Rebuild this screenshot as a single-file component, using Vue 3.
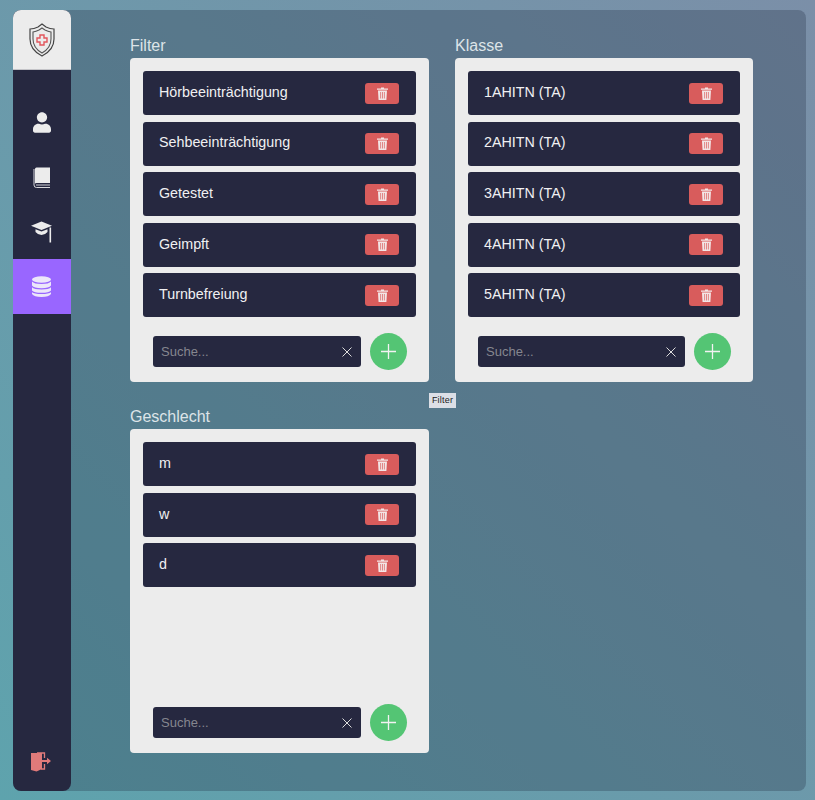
<template>
  <div class="page">
    <div class="panel">
      <aside class="sidebar">
        <div class="logo">
          <svg width="26" height="34" viewBox="0 0 26 34" fill="none">
            <path d="M13 1 L17 4 Q21 6 25 6 V16 Q25 27 13 33 Q1 27 1 16 V6 Q5 6 9 4 Z" stroke="#444" stroke-width="1.2" />
            <path d="M13 5 L16 7 Q19 8.500 22 9 V16 Q22 25 13 30 Q4 25 4 16 V9 Q7 8.500 10 7 Z" stroke="#555" stroke-width="1.1" />
            <path d="M11 12 H15 V15 H18 V19 H15 V22 H11 V19 H8 V15 H11 Z" stroke="#e2555c" stroke-width="1.4" />
          </svg>
        </div>
        <nav class="nav">
          <a class="nav-item">
            <svg width="18" height="21" viewBox="0 0 448 512" fill="#ececec">
              <path d="M224 256c70.700 0 128-57.300 128-128S294.700 0 224 0 96 57.300 96 128s57.300 128 128 128zm89.600 32h-16.700c-22.200 10.200-46.900 16-72.900 16s-50.600-5.800-72.900-16h-16.700C60.200 288 0 348.200 0 422.400V464c0 26.500 21.500 48 48 48h352c26.500 0 48-21.500 48-48v-41.600c0-74.200-60.200-134.400-134.400-134.400z" />
            </svg>
          </a>
          <a class="nav-item">
            <svg width="18" height="21" viewBox="0 0 18 21" fill="none">
              <path d="M3.500 0.500 H17 V16 H3.500 Q2.500 16 2 16.500 V2 Q2 0.500 3.500 0.500 Z" fill="#ececec" />
              <path d="M1 2 V18 Q1 20.500 3.500 20.500 H17" stroke="#d8d8dc" stroke-width="1" />
              <path d="M3 18 H17" stroke="#9a9aa6" stroke-width="1.500" />
            </svg>
          </a>
          <a class="nav-item">
            <svg width="22" height="22" viewBox="0 0 22 22" fill="#ececec">
              <path d="M10.500 0.500 L21 4.700 L10.500 9 L0 4.700 Z" />
              <path d="M4.500 8.200 L10.500 10.600 L16.500 8.200 V11 Q14 14 10.500 14 Q7 14 4.500 11 Z" />
              <rect x="18.500" y="6.500" width="1.600" height="15" />
            </svg>
          </a>
          <a class="nav-item active">
            <svg width="19" height="21" viewBox="0 0 19 21" fill="#ece6fa">
              <ellipse cx="9.500" cy="3.500" rx="9.500" ry="3.200" />
              <path d="M0 5.500 Q2 8 9.500 8 Q17 8 19 5.500 V9.500 Q17 12.300 9.500 12.300 Q2 12.300 0 9.500 Z" />
              <path d="M0 11.300 Q2 13.500 9.500 13.500 Q17 13.500 19 11.300 V14.500 Q17 16.800 9.500 16.800 Q2 16.800 0 14.500 Z" />
              <path d="M0 16.200 Q2 18 9.500 18 Q17 18 19 16.200 V18 Q17 21 9.500 21 Q2 21 0 18 Z" />
            </svg>
          </a>
        </nav>
        <a class="logout">
          <svg width="21" height="20" viewBox="0 0 21 20" fill="none">
            <path d="M0 1 H11 V17 L5.500 19.500 L0 18 Z" fill="#e07a7a" />
            <path d="M6 1 H13.500 V6 M13.500 12 V17 H10" stroke="#e07a7a" stroke-width="1.300" />
            <path d="M9.500 8 H16 V5.800 L20 9 L16 12.200 V10 H9.500 Z" fill="#e07a7a" />
          </svg>
        </a>
      </aside>

      <main class="content">
        <section v-for="group in groups" :key="group.title" class="group">
          <h2 class="group-title">{{ group.title }}</h2>
          <div class="card">
            <ul class="rows">
              <li v-for="item in group.items" :key="item" class="row">
                <span class="row-label">{{ item }}</span>
                <button class="trash-btn" type="button">
                  <svg width="11" height="13" viewBox="0 0 11 13" fill="none">
                    <path d="M4 0.500 H7 V1.500 H11 V2.800 H0 V1.500 H4 Z" fill="#f3e6e6" />
                    <path d="M1 3.600 H10 L9.400 13 H1.600 Z" fill="#f3e6e6" />
                    <path d="M3.600 5 V11.500 M5.500 5 V11.500 M7.400 5 V11.500" stroke="#d85c5c" stroke-width="0.700" />
                  </svg>
                </button>
              </li>
            </ul>
            <div class="search-row">
              <div class="search">
                <span class="search-text">Suche...</span>
                <svg width="10" height="10" viewBox="0 0 10 10" fill="none">
                  <path d="M0.500 0.500 L9.500 9.500 M9.500 0.500 L0.500 9.500" stroke="#dcdcdc" stroke-width="1" />
                </svg>
              </div>
              <button class="add-btn" type="button">
                <svg width="15" height="15" viewBox="0 0 15 15" fill="none">
                  <path d="M7.500 0 V15 M0 7.500 H15" stroke="#f2f2f2" stroke-width="1.300" />
                </svg>
              </button>
            </div>
          </div>
        </section>
        <div class="tooltip">Filter</div>
      </main>
    </div>
  </div>
</template>

<script setup>
const groups = [
  {
    title: 'Filter',
    items: ['Hörbeeinträchtigung', 'Sehbeeinträchtigung', 'Getestet', 'Geimpft', 'Turnbefreiung'],
  },
  {
    title: 'Klasse',
    items: ['1AHITN (TA)', '2AHITN (TA)', '3AHITN (TA)', '4AHITN (TA)', '5AHITN (TA)'],
  },
  {
    title: 'Geschlecht',
    items: ['m', 'w', 'd'],
  },
]
</script>

<style>
html, body { margin: 0; padding: 0; }
</style>

<style scoped>
.page {
  box-sizing: border-box;
  width: 815px;
  height: 800px;
  padding: 10px 9px 9px 12.500px;
  background: linear-gradient(to top right, #5ea3ad, #7b8fa8);
  font-family: "Liberation Sans", Arial, sans-serif;
  overflow: hidden;
}
.panel {
  display: flex;
  height: 781px;
  border-radius: 8px;
  background: rgba(30, 40, 60, 0.28);
}
.sidebar {
  display: flex;
  flex-direction: column;
  flex: 0 0 58.500px;
  background: #262840;
  border-radius: 8px;
  overflow: hidden;
}
.logo {
  display: flex;
  align-items: center;
  justify-content: center;
  height: 59px;
  background: #ececec;
  border-bottom: 1px solid #c4c4c8;
}
.nav {
  display: flex;
  flex-direction: column;
  padding-top: 25.500px;
}
.nav-item {
  display: flex;
  align-items: center;
  justify-content: center;
  height: 54.500px;
}
.nav-item.active {
  background: #9966ff;
}
.logout {
  display: flex;
  justify-content: center;
  margin-top: auto;
  padding: 0 0 19px 0;
}
.content {
  position: relative;
  display: grid;
  grid-template-columns: 299px 298px;
  grid-auto-rows: 371.200px;
  column-gap: 26px;
  padding: 26px 0 0 59px;
}
.group {
  display: flex;
  flex-direction: column;
}
.group-title {
  margin: 0;
  height: 22px;
  font-size: 16px;
  line-height: 20px;
  font-weight: 400;
  color: #dde4e8;
}
.card {
  box-sizing: border-box;
  display: flex;
  flex-direction: column;
  height: 324px;
  padding: 13px 13px 12px;
  background: #ececec;
  border-radius: 4px;
}
.rows {
  display: flex;
  flex-direction: column;
  gap: 6.600px;
  margin: 0;
  padding: 0;
  list-style: none;
}
.row {
  display: flex;
  align-items: center;
  justify-content: space-between;
  height: 44px;
  padding: 0 17px 0 16px;
  background: #262840;
  border-radius: 3px;
}
.row-label {
  font-size: 14.300px;
  line-height: 1;
  color: #f0f0f2;
  position: relative;
  top: -1px;
}
.trash-btn {
  display: flex;
  align-items: center;
  justify-content: center;
  width: 34px;
  height: 21px;
  padding: 0;
  border: 0;
  border-radius: 3px;
  background: #d85c5c;
}
.search-row {
  display: flex;
  align-items: center;
  gap: 9px;
  margin-top: auto;
  padding: 0 9px 0 10px;
}
.search {
  box-sizing: border-box;
  flex: 1;
  display: flex;
  align-items: center;
  justify-content: space-between;
  height: 31px;
  padding: 0 9px 0 8px;
  background: #262840;
  border-radius: 3px;
}
.search-text {
  font-size: 13px;
  color: #85868f;
}
.add-btn {
  display: flex;
  align-items: center;
  justify-content: center;
  flex: 0 0 37px;
  width: 37px;
  height: 37px;
  padding: 0;
  border: 0;
  border-radius: 50%;
  background: #54c574;
}
.tooltip {
  position: absolute;
  left: 358px;
  top: 383px;
  box-sizing: border-box;
  width: 27px;
  height: 15px;
  background: #dcdfe6;
  color: #222;
  font-size: 9px;
  letter-spacing: 0.200px;
  line-height: 15px;
  text-align: center;
}
</style>
